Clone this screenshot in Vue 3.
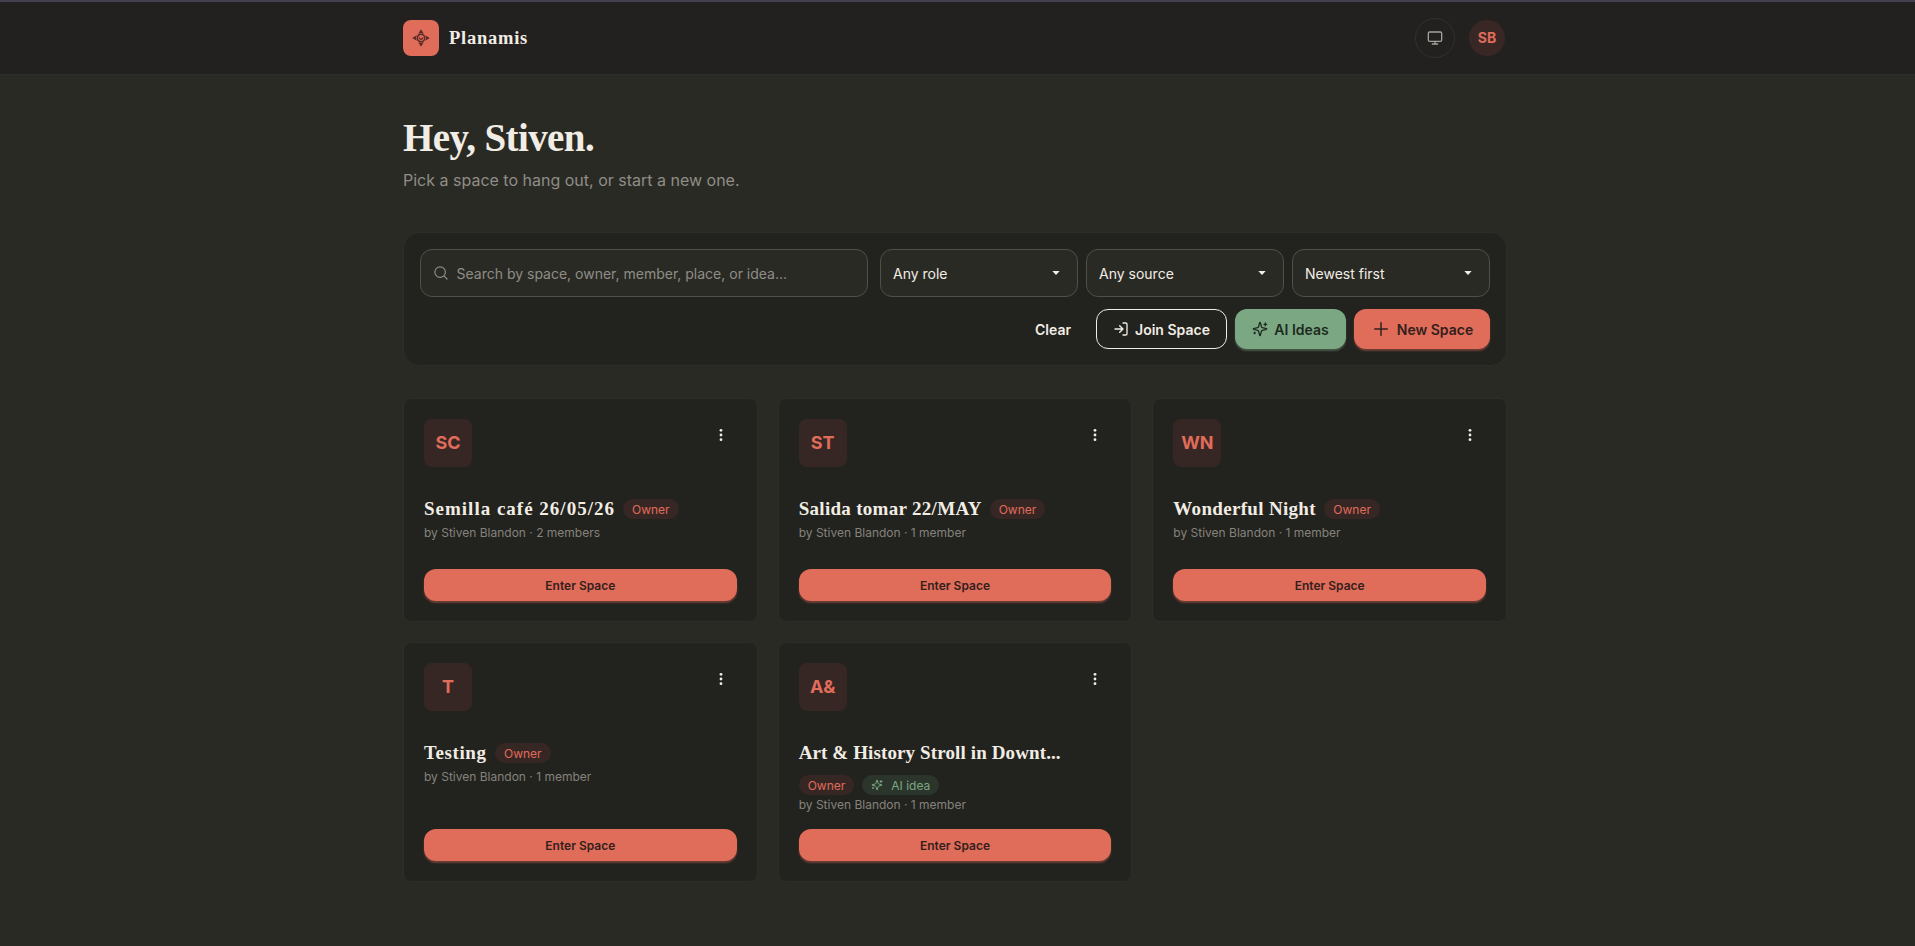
<script setup>
const filters = ['Any role', 'Any source', 'Newest first']
const spaces = [
  { initials: 'SC', title: 'Semilla café 26/05/26', members: '2 members', width: 191, spacing: 1 },
  { initials: 'ST', title: 'Salida tomar 22/MAY', members: '1 member', width: 183, spacing: 0.3 },
  { initials: 'WN', title: 'Wonderful Night', members: '1 member', width: 143, spacing: 0.32 },
  { initials: 'T', title: 'Testing', members: '1 member', width: 63, spacing: 0.6 },
  { initials: 'A&', title: 'Art & History Stroll in Downt...', members: '1 member', width: 312, spacing: 0.12, ai: true },
]
</script>

<template>
  <div class="page">
    <header class="header">
      <div class="bar">
        <div class="logo">
          <svg width="18" height="18" viewBox="0 0 18 18" fill="none" stroke="#5d2a27" stroke-width="1.500">
            <circle cx="9" cy="9" r="3.700" />
            <path d="M7.300 8.600a1.700 1.700 0 0 0 3.400 0" stroke-width="1.300" />
            <path d="M9 .3 11.800 4.700 9 3.900 6.200 4.700zM9 17.700 11.800 13.300 9 14.100 6.200 13.300zM.3 9 4.700 6.200 3.900 9l.8 2.800zM17.700 9 13.300 6.200l.8 2.800-.8 2.800z" fill="#5d2a27" stroke="none" />
          </svg>
        </div>
        <span class="brand">Planamis</span>
        <button class="theme">
          <svg width="16" height="16" viewBox="0 0 24 24" fill="none" stroke="currentColor" stroke-width="2" stroke-linecap="round" stroke-linejoin="round"><rect x="2" y="3" width="20" height="14" rx="2" /><path d="M8 21h8M12 17v4" /></svg>
        </button>
        <div class="user">SB</div>
      </div>
    </header>

    <main class="main">
      <h1 class="hello">Hey, Stiven.</h1>
      <p class="lead">Pick a space to hang out, or start a new one.</p>

      <section class="panel">
        <div class="row">
          <label class="search">
            <svg width="14" height="14" viewBox="0 0 24 24" fill="none" stroke="currentColor" stroke-width="2" stroke-linecap="round"><circle cx="10.500" cy="10.500" r="9" /><path d="m17.500 17.500 4.800 4.800" /></svg>
            <span>Search by space, owner, member, place, or idea...</span>
          </label>
          <div class="filters">
            <div v-for="f in filters" :key="f" class="select">
              <span>{{ f }}</span>
              <svg width="8" height="4" viewBox="0 0 8 4"><path d="M.3 0h7.400L4 4z" fill="currentColor" /></svg>
            </div>
          </div>
        </div>
        <div class="row actions">
          <button class="btn clear">Clear</button>
          <button class="btn join">
            <svg width="16" height="16" viewBox="0 0 24 24" fill="none" stroke="currentColor" stroke-width="2" stroke-linecap="round" stroke-linejoin="round"><path d="M15 3h4a2 2 0 0 1 2 2v14a2 2 0 0 1-2 2h-4M10 17l5-5-5-5M15 12H3" /></svg>
            Join Space
          </button>
          <button class="btn ai">
            <svg width="16" height="16" viewBox="0 0 24 24" fill="none" stroke="currentColor" stroke-width="2" stroke-linecap="round" stroke-linejoin="round"><path d="M9.937 15.500A2 2 0 0 0 8.500 14.063l-6.135-1.582a.5.5 0 0 1 0-.962L8.500 9.936A2 2 0 0 0 9.937 8.500l1.582-6.135a.5.5 0 0 1 .963 0L14.063 8.500A2 2 0 0 0 15.500 9.937l6.135 1.581a.5.5 0 0 1 0 .964L15.500 14.063a2 2 0 0 0-1.437 1.437l-1.582 6.135a.5.5 0 0 1-.963 0zM20 3v4M22 5h-4M4 17v2M5 18H3" /></svg>
            AI Ideas
          </button>
          <button class="btn new">
            <svg width="20" height="20" viewBox="0 0 24 24" fill="none" stroke="currentColor" stroke-width="1.800" stroke-linecap="round"><path d="M4.500 12h15M12 4.500v15" /></svg>
            New Space
          </button>
        </div>
      </section>

      <section class="grid">
        <article v-for="s in spaces" :key="s.title" class="card">
          <div class="top">
            <div class="avatar">{{ s.initials }}</div>
            <button class="menu">
              <svg width="14" height="14" viewBox="0 0 14 14" fill="currentColor"><circle cx="7" cy="2.300" r="1.400" /><circle cx="7" cy="7" r="1.400" /><circle cx="7" cy="11.700" r="1.400" /></svg>
            </button>
          </div>
          <div class="heading">
            <h2 class="title" :style="{ width: s.width + 'px', letterSpacing: s.spacing + 'px' }">{{ s.title }}</h2>
            <span class="badge">Owner</span>
            <span v-if="s.ai" class="badge idea">
              <svg width="12" height="12" viewBox="0 0 24 24" fill="none" stroke="currentColor" stroke-width="2" stroke-linecap="round" stroke-linejoin="round"><path d="M9.937 15.500A2 2 0 0 0 8.500 14.063l-6.135-1.582a.5.5 0 0 1 0-.962L8.500 9.936A2 2 0 0 0 9.937 8.500l1.582-6.135a.5.5 0 0 1 .963 0L14.063 8.500A2 2 0 0 0 15.500 9.937l6.135 1.581a.5.5 0 0 1 0 .964L15.500 14.063a2 2 0 0 0-1.437 1.437l-1.582 6.135a.5.5 0 0 1-.963 0zM20 3v4M22 5h-4M4 17v2M5 18H3" /></svg>
              AI idea
            </span>
          </div>
          <p class="meta">by Stiven Blandon · {{ s.members }}</p>
          <button class="enter">Enter Space</button>
        </article>
      </section>
    </main>
  </div>
</template>

<style>
body {
  background: #2a2a25;
}
</style>

<style scoped>
.page {
  box-sizing: border-box;
  min-height: 946px;
  background: #2a2a25;
  color: #f2ede4;
  font-family: Inter, "Liberation Sans", sans-serif;
}
.page * {
  box-sizing: border-box;
}
button {
  font: inherit;
  color: inherit;
  background: none;
  border: 0;
  padding: 0;
}
h1, h2, p {
  margin: 0;
}
svg {
  flex: none;
  display: block;
}
.header {
  height: 75px;
  border-top: 2px solid #45404f;
  border-bottom: 1px solid #2e2d2a;
  background: #232120;
  padding-right: 5px;
}
.bar {
  width: 1104px;
  height: 72px;
  margin: 0 auto;
  display: flex;
  align-items: center;
}
.logo {
  width: 36px;
  height: 36px;
  border-radius: 8px;
  background: #e06c5a;
  display: flex;
  align-items: center;
  justify-content: center;
}
.brand {
  margin-left: 10px;
  font: 700 18.5px "Liberation Serif", serif;
  letter-spacing: 0.75px;
}
.theme {
  width: 40px;
  height: 40px;
  margin-left: auto;
  border: 1px solid #31302d;
  border-radius: 50%;
  color: #a3a09a;
  display: flex;
  align-items: center;
  justify-content: center;
}
.user {
  width: 36px;
  height: 36px;
  margin: 0 2px 0 14px;
  border-radius: 50%;
  background: #382725;
  color: #e06c5a;
  font-size: 14px;
  font-weight: 700;
  line-height: 36px;
  text-align: center;
}
.main {
  width: 1109px;
  margin: 0 auto;
  padding: 40px 5px 0 0;
}
.hello {
  height: 45px;
  font: 700 39px/45px "Liberation Serif", serif;
  letter-spacing: -0.6px;
}
.lead {
  margin-top: 8px;
  height: 24px;
  font-size: 16px;
  line-height: 24px;
  color: #8f8d86;
}
.panel {
  margin-top: 40px;
  padding: 16px;
  border: 1px solid #2d2e29;
  border-radius: 16px;
  background: #22221e;
}
.row {
  display: flex;
  gap: 12px;
}
.actions {
  margin-top: 12px;
  gap: 8px;
  justify-content: flex-end;
}
.search {
  flex: 1;
  height: 48px;
  padding: 0 13px;
  display: flex;
  align-items: center;
  gap: 8.5px;
  border: 1px solid #50504b;
  border-radius: 12px;
  background: #2a2a25;
  color: #8f8d86;
  font-size: 14px;
}
.filters {
  display: flex;
  gap: 8px;
}
.select {
  width: 198px;
  height: 48px;
  padding: 0 17px 0 12px;
  display: flex;
  align-items: center;
  justify-content: space-between;
  border: 1px solid #50504b;
  border-radius: 12px;
  background: #2a2a25;
  font-size: 14px;
}
.btn {
  height: 40px;
  display: flex;
  align-items: center;
  justify-content: center;
  gap: 6px;
  border-radius: 12px;
  font-size: 14px;
  font-weight: 600;
}
.clear {
  width: 68px;
  margin-right: 1px;
}
.join {
  width: 131px;
  border: 1px solid #f2ede4;
}
.ai {
  width: 111px;
  background: #7ba882;
  color: #1d2b20;
  box-shadow: 0 2px 2px rgba(123, 168, 130, 0.4);
}
.new {
  width: 136px;
  background: #e06c5a;
  color: #33201c;
  box-shadow: 0 2px 2px rgba(224, 108, 90, 0.4);
}
.grid {
  margin-top: 32px;
  display: grid;
  grid-template-columns: repeat(3, 1fr);
  gap: 20px;
}
.card {
  min-height: 224px;
  padding: 20px;
  border: 1px solid #2d2e29;
  border-radius: 8px;
  background: #22221e;
  display: flex;
  flex-direction: column;
}
.top {
  display: flex;
  justify-content: space-between;
}
.avatar {
  width: 48px;
  height: 48px;
  border-radius: 8px;
  background: #372724;
  color: #e06c5a;
  font-size: 18px;
  font-weight: 700;
  line-height: 48px;
  text-align: center;
}
.menu {
  width: 32px;
  height: 32px;
  display: flex;
  align-items: center;
  justify-content: center;
}
.heading {
  margin-top: 28px;
  display: flex;
  flex-wrap: wrap;
  align-items: center;
  gap: 8px;
}
.title {
  height: 28px;
  white-space: nowrap;
  font: 700 19px/28px "Liberation Serif", serif;
}
.badge {
  height: 20px;
  padding: 0 9px;
  display: flex;
  align-items: center;
  gap: 8px;
  border-radius: 10px;
  background: #372724;
  color: #e06c5a;
  font-size: 12px;
}
.idea {
  background: #2c352b;
  color: #7ba882;
}
.meta {
  margin: 2px 0 16px;
  font-size: 12px;
  line-height: 16px;
  color: #85837c;
}
.enter {
  margin-top: auto;
  height: 32px;
  border-radius: 12px;
  background: #e06c5a;
  color: #33201c;
  font-size: 12px;
  font-weight: 600;
  box-shadow: 0 2px 2px rgba(224, 108, 90, 0.4);
}
</style>
